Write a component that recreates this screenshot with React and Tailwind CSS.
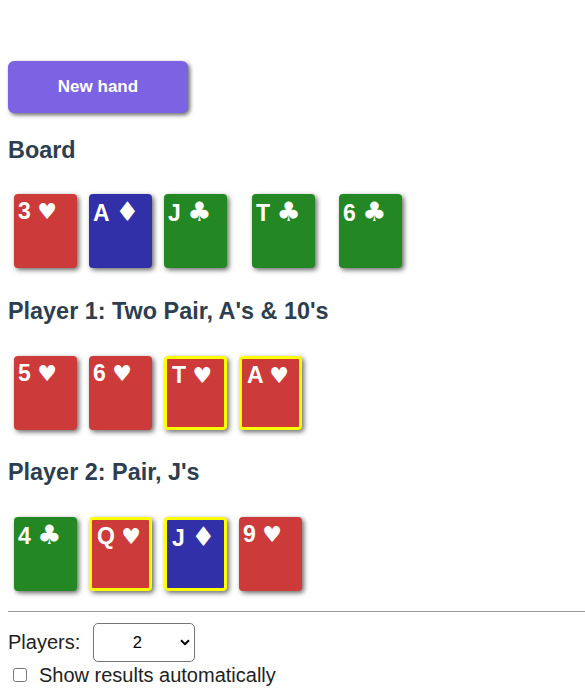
const COLORS = {
  h: "bg-[#cc3a3a]",
  d: "bg-[#3130a8]",
  c: "bg-[#238823]",
  s: "bg-[#222222]",
};

const SUITS = { h: "♥", d: "♦", c: "♣", s: "♠" };

const SUIT_SIZE = {
  h: "text-[22px]",
  d: "text-[27px]",
  c: "text-[27px]",
  s: "text-[26px]",
};

const BOARD = [
  { rank: "3", suit: "h" },
  { rank: "A", suit: "d" },
  { rank: "J", suit: "c" },
  { rank: "T", suit: "c", gap: "ml-[13px]" },
  { rank: "6", suit: "c", gap: "ml-[12px]" },
];

const PLAYERS = [
  {
    title: "Player 1: Two Pair, A's & 10's",
    cards: [
      { rank: "5", suit: "h" },
      { rank: "6", suit: "h" },
      { rank: "T", suit: "h", best: true },
      { rank: "A", suit: "h", best: true },
    ],
  },
  {
    title: "Player 2: Pair, J's",
    cards: [
      { rank: "4", suit: "c" },
      { rank: "Q", suit: "h", best: true },
      { rank: "J", suit: "d", best: true },
      { rank: "9", suit: "h" },
    ],
  },
];

function Card({ rank, suit, best, gap }) {
  return (
    <div
      className={`w-[63px] h-[74px] rounded-[4px] shadow-[2px_2px_5px_rgba(0,0,0,0.6)] text-white font-bold text-[23px] leading-[26px] whitespace-nowrap ${COLORS[suit]} ${
        best ? "border-[3px] border-[#ffff00] pt-[3px] pl-[5px]" : "pt-[4px] pl-[4px]"
      } ${gap || ""}`}
    >
      {rank}{" "}
      <span className={`font-['DejaVu_Sans',sans-serif] leading-none ${SUIT_SIZE[suit]}`}>{SUITS[suit]}</span>
    </div>
  );
}

function Section({ title, cards, first }) {
  return (
    <div className={first ? "mt-[23.5px]" : "mt-[29.5px]"}>
      <h3 className="text-[23.4px] leading-[27px] font-bold text-[#2c3e50] mb-[30.8px]">{title}</h3>
      <div className="flex gap-[12px] pl-[6px]">
        {cards.map((c, i) => (
          <Card key={i} {...c} />
        ))}
      </div>
    </div>
  );
}

export default function App() {
  return (
    <div className="min-h-[697px] bg-white pt-[61px] pl-[8px] font-['Liberation_Sans',Arial,sans-serif] text-[#222]">
      <button className="w-[180px] h-[52px] rounded-[6px] bg-[#7b63e3] text-white font-bold text-[17px] shadow-[2px_2px_4px_rgba(0,0,0,0.6)]">
        New hand
      </button>

      <Section title="Board" cards={BOARD} first />
      {PLAYERS.map((p) => (
        <Section key={p.title} title={p.title} cards={p.cards} />
      ))}

      <div className="mt-[20px] border-t border-[#9c9c9c]" />

      <div className="mt-[11px] h-[39px] flex items-center gap-[13px] text-[20px]">
        <span>Players:</span>
        <div className="relative w-[102px] h-[39px]">
          <select
            defaultValue="2"
            className="appearance-none w-full h-full rounded-[5px] border border-[#767676] bg-white text-[16.5px] text-black text-center pr-[14px] font-['Liberation_Sans',Arial,sans-serif]"
          >
            <option value="2">2</option>
            <option value="3">3</option>
            <option value="4">4</option>
            <option value="5">5</option>
            <option value="6">6</option>
          </select>
          <svg
            viewBox="0 0 10 7"
            className="absolute right-[5px] top-[16px] w-[10px] h-[7px] pointer-events-none"
          >
            <path d="M1 1.2 L5 5.2 L9 1.2" fill="none" stroke="black" strokeWidth="2" />
          </svg>
        </div>
      </div>

      <label className="mt-[2px] h-[23px] flex items-center gap-[12px] pl-[5px] text-[20px] leading-[23px]">
        <input type="checkbox" className="m-0 w-[14px] h-[14px]" />
        <span>Show results automatically</span>
      </label>
    </div>
  );
}
